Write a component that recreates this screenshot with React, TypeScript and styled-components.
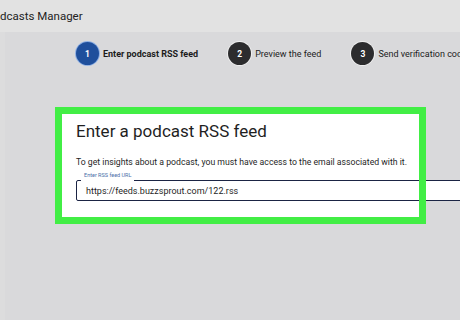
import React from "react";
import styled, { createGlobalStyle } from "styled-components";

const GlobalStyle = createGlobalStyle`
  html, body {
    margin: 0;
    padding: 0;
    width: 460px;
    height: 320px;
    overflow: hidden;
    background: #d9d9db;
  }
  * { box-sizing: border-box; }
`;

const Page = styled.div`
  width: 460px;
  height: 320px;
  display: flex;
  flex-direction: column;
  font-family: "Roboto", "Liberation Sans", sans-serif;
  color: #202124;
`;

const Header = styled.div`
  height: 32px;
  flex: none;
  display: flex;
  align-items: center;
  background: #e2e2e2;
  font-size: 11.5px;
  color: #222;
`;

const Main = styled.div`
  flex: 1;
  display: flex;
  flex-direction: column;
  background: #d9d9db;
  border-left: 5px solid #dcdcdd;
`;

const Steps = styled.div`
  display: flex;
  align-items: center;
  gap: 30px;
  padding: 10px 0 0 71px;
  white-space: nowrap;
`;

const Step = styled.div`
  display: flex;
  align-items: center;
  gap: 4px;
`;

const Circle = styled.div<{ $active?: boolean }>`
  width: 23px;
  height: 23px;
  border-radius: 50%;
  display: flex;
  align-items: center;
  justify-content: center;
  font-size: 8.5px;
  font-weight: 700;
  color: #fff;
  background: ${(p) => (p.$active ? "#1f4f9c" : "#2c2c2e")};
  box-shadow: ${(p) => (p.$active ? "0 0 0 1px #8fb0e4" : "0 0 0 1px #efefef")};
`;

const StepLabel = styled.span<{ $active?: boolean }>`
  font-size: 9px;
  font-weight: ${(p) => (p.$active ? 700 : 400)};
  color: #1c1c1c;
`;

const Card = styled.div`
  position: relative;
  margin: 42px 0 0 50px;
  width: 371px;
  height: 117px;
  background: #fff;
  padding: 14px 0 0 21px;
  &::after {
    content: "";
    position: absolute;
    inset: 0;
    border: 7px solid #42ee45;
    pointer-events: none;
    z-index: 2;
  }
`;

const Title = styled.h1`
  margin: 0;
  font-size: 17px;
  line-height: 20px;
  font-weight: 400;
  color: #1f1f1f;
`;

const Lead = styled.p`
  margin: 15px 0 0;
  font-size: 8.7px;
  line-height: 12px;
  color: #1f1f1f;
  white-space: nowrap;
`;

const Field = styled.div`
  position: relative;
  margin-top: 12px;
  width: 400px;
  height: 21px;
  border: 1px solid #1b2444;
  border-radius: 2px;
  display: flex;
  align-items: center;
  padding-left: 9px;
  background: #fff;
`;

const FieldLabel = styled.span`
  position: absolute;
  left: 4px;
  top: -9px;
  height: 10px;
  padding: 0 3px;
  background: #fff;
  font-size: 5.5px;
  line-height: 6px;
  color: #4a6fa8;
`;

const FieldValue = styled.span`
  font-size: 9px;
  color: #1f1f1f;
`;

export default function App() {
  return (
    <Page>
      <GlobalStyle />
      <Header>dcasts Manager</Header>
      <Main>
        <Steps>
          <Step>
            <Circle $active>1</Circle>
            <StepLabel $active>Enter podcast RSS feed</StepLabel>
          </Step>
          <Step>
            <Circle>2</Circle>
            <StepLabel>Preview the feed</StepLabel>
          </Step>
          <Step>
            <Circle>3</Circle>
            <StepLabel>Send verification code</StepLabel>
          </Step>
        </Steps>
        <Card>
          <Title>Enter a podcast RSS feed</Title>
          <Lead>
            To get insights about a podcast, you must have access to the email
            associated with it.
          </Lead>
          <Field>
            <FieldLabel>Enter RSS feed URL</FieldLabel>
            <FieldValue>https://feeds.buzzsprout.com/122.rss</FieldValue>
          </Field>
        </Card>
      </Main>
    </Page>
  );
}
